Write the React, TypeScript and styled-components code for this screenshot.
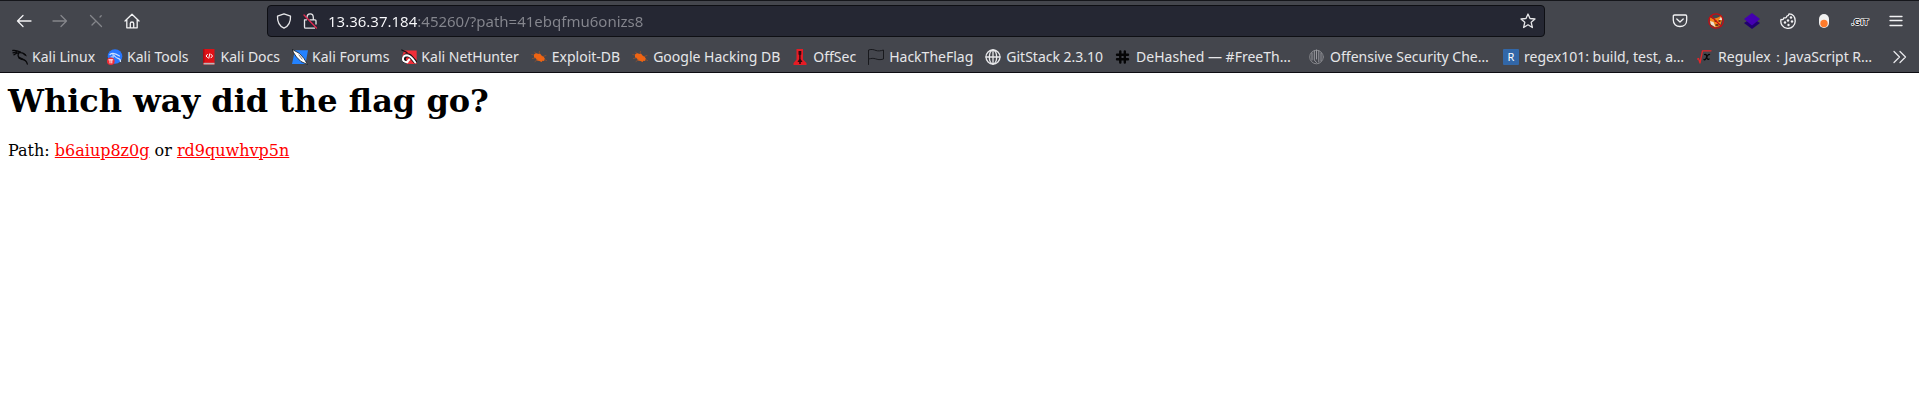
import React from "react";
import styled, { createGlobalStyle } from "styled-components";

const GlobalStyle = createGlobalStyle`
  * { box-sizing: border-box; }
  body {
    margin: 0;
    background: #fff;
    color: #000;
    font-family: "DejaVu Serif", serif;
    font-size: 16px;
  }
`;

const Chrome = styled.header`
  background: #44464d;
  border-top: 1px solid #15161b;
  border-bottom: 1px solid #0c0c12;
  color: #e6e6e9;
  font-family: "Noto Sans", sans-serif;
  font-size: 14px;
`;

const NavBar = styled.div`
  display: flex;
  align-items: center;
  height: 40px;
  padding: 0 5px 0 6px;
`;

const ToolGroup = styled.nav`
  display: flex;
`;

const ToolButton = styled.button`
  display: flex;
  align-items: center;
  justify-content: center;
  width: 36px;
  height: 32px;
  padding: 0;
  border: 0;
  background: none;
  color: #f2f2f4;

  &:disabled { color: #85868b; }
`;

const AddressBar = styled.form`
  display: flex;
  flex: 1;
  align-items: center;
  gap: 10px;
  height: 32px;
  margin: 0 117px;
  padding: 0 8px;
  border: 1px solid #0e0f14;
  border-radius: 4px;
  background: #252733;
`;

const BarButton = styled.button`
  display: flex;
  padding: 0;
  border: 0;
  background: none;
  color: #e6e6e9;
`;

const AddressInput = styled.input`
  flex: 1;
  min-width: 0;
  height: 24px;
  padding: 0;
  border: 0;
  outline: 0;
  color: #fbfbfe;
  font-family: inherit;
  font-size: 15px;
  background: linear-gradient(to right, #fbfbfe 89px, #85868e 89px);
  -webkit-background-clip: text;
  background-clip: text;
  -webkit-text-fill-color: transparent;
`;

const BookmarkBar = styled.nav`
  display: flex;
  align-items: center;
  justify-content: space-between;
  height: 31px;
  padding: 1px 11px 0 12px;
`;

const BookmarkList = styled.ul`
  display: flex;
  gap: 12px;
  margin: 0;
  padding: 0;
  list-style: none;
`;

const Bookmark = styled.a<{ $compact?: boolean; $wide?: boolean }>`
  display: flex;
  align-items: center;
  gap: ${(p) => (p.$compact ? "4px" : "5px")};
  width: ${(p) => (p.$wide ? "182px" : "auto")};
  color: inherit;
  line-height: 20px;
  text-decoration: none;
  white-space: nowrap;
`;

const Page = styled.main`
  padding: 8px;
`;

const Title = styled.h1`
  margin: 0 0 20px;
  font-size: 32px;
  line-height: 40px;
`;

const Paths = styled.p`
  margin: 0;
  line-height: 20px;
`;

const PathLink = styled.a`
  color: #ff0000;
`;

const Icon = styled.svg.attrs({ viewBox: "0 0 16 16", width: 16, height: 16, "aria-hidden": true })`
  flex: none;
  fill: none;
  stroke: currentColor;
  stroke-width: 1.3;
  stroke-linecap: round;
  stroke-linejoin: round;
`;

const KaliLinux = () => (
  <Icon>
    <path d="M.8 1.500C3.500 1 6.500 2.200 8.500 3.200M1 3.800 4.500 2.800M2 5.800C4 4 6 3.500 8.500 3.600 10.500 3.600 12 4 13.300 6M7 3.800C5 6.500 6.500 9 9.500 9.800 13 10.500 14.800 12 15.300 15" stroke="#08080a" strokeWidth="1.300" />
    <path d="M10 3.500 13.500 5 15 7.500 12 6ZM6 6.500 6.500 9.500 9.500 11 13 11.500 10 9 7.500 8Z" fill="#08080a" stroke="none" />
  </Icon>
);

const KaliTools = () => (
  <Icon>
    <circle cx="8" cy="7.500" r="7.300" fill="#2777ff" stroke="none" />
    <path d="M3 5.500C5.500 3 8.500 4.200 12.500 7M5.500 6C8 5.500 7.500 9 11 9.300 13 9.600 13.500 11 13.500 12.500M4 8 6.500 7.800" stroke="#cde1ff" strokeWidth="1.200" />
    <circle cx="3.800" cy="12.200" r="3.800" fill="#ef2b35" stroke="none" />
    <path d="M1.800 10.800H5.800M3 10.800V14M4.800 10.800V14" stroke="#fff" strokeWidth="0.9" />
  </Icon>
);

const KaliDocs = () => (
  <Icon>
    <path d="M2 0H13.500V15.500H2Z" fill="#de1117" stroke="none" />
    <path d="M2 0H3.500V15.500H2Z" fill="#a90c12" stroke="none" />
    <path d="M2.500 13.800H13.500V15.500H2.500Z" fill="#bcb5b7" stroke="none" />
    <path d="M6.500 5.300 5 7 6.500 8.500M10 5.300 11.500 7 10 8.800M8.800 4.800 7.800 9.200" stroke="#fff" strokeWidth="1" />
  </Icon>
);

const KaliForums = () => (
  <Icon>
    <path d="M3 1.300H16L13.500 15H0Z" fill="#2382ff" stroke="none" />
    <path d="M.3 .5 4 2.500 7.500 4.500 12 9.500 15.500 15.500 9 12.500 4.500 8 1.800 4Z" fill="#fff" stroke="#17191d" strokeWidth="0.8" />
    <path d="M7 6 10 10" stroke="#555a63" strokeWidth="0.8" />
  </Icon>
);

const KaliNetHunter = () => (
  <Icon>
    <path d="M3 1.500H15.700V15H6L1 8Z" fill="#f12e38" stroke="none" />
    <path d="M3.500 12C1.500 8 5 5 9 7L14 12.500" stroke="#121317" strokeWidth="4" />
    <path d="M6.500 13.200C0 13.500 1 6.500 6 6.300 9.500 6.300 11.500 9.500 14.300 13.500M6.500 12.500 8.300 10.500" stroke="#fff" strokeWidth="2" />
    <path d="M.8 1 6 3.500" stroke="#121317" />
  </Icon>
);

const Bug = () => (
  <Icon>
    <path d="M3 5.500 5 4 7.500 5 9 4.500 10.500 6.500 12.500 7.500 14 10 13 12 11.500 11.800 10.500 13 8.500 12 6 11.500 5 9.500 3 8.500Z" fill="#ef6413" stroke="none" />
    <path d="M5 4.500 3.500 3M8 4.500 8.500 2.500M12 7.500 15 6.500M4 9 1.500 9.500M6 11 4 12.500M13.500 10.500 15.500 11.500M2.500 6 .8 5.500" stroke="#96522f" strokeWidth="0.8" />
  </Icon>
);

const OffSec = () => (
  <Icon>
    <path d="M4.500 0H11V10.500L14.500 14V16H1.500V14L4.500 10.500Z" fill="#e51c25" stroke="none" />
    <path d="M6.500 2H9.300V5.500L8.600 6V10L10.500 13H8.800V15H7.200V13H5.500L7.200 10V6L6.500 5.500Z" fill="#2d0b10" stroke="none" />
  </Icon>
);

const Flag = () => (
  <Icon><path d="M.5 15.500V1C4 -.2 6 .8 8 1.500S12.500 2 15.500 1V10C12 11.200 9.500 10.500 7.500 9.800S3 9.300 .8 10" stroke="#18191d" strokeWidth="1" /></Icon>
);

const Globe = () => (
  <Icon><circle cx="8" cy="8" r="7" /><ellipse cx="8" cy="8" rx="3.700" ry="7" /><path d="M1 8H15M8 1V15" /></Icon>
);

const Hash = () => (
  <Icon><path d="M5.300 2.500V13.500M9.800 2.500V13.500M2 5.800H13M2 10.300H13" stroke="#050506" strokeWidth="2.400" /></Icon>
);

const Striped = () => (
  <Icon>
    <circle cx="7.500" cy="8" r="6.800" stroke="#85868b" strokeWidth="1" />
    <path d="M3 4V11M5.300 2V11L7.500 13.500M7.500 1V10M9.800 2V13M12 4V12" stroke="#a1a2a7" strokeWidth="0.9" />
  </Icon>
);

const Regex = () => (
  <Icon>
    <rect width="16" height="16" rx="1" fill="#3267a8" stroke="none" />
    <text x="8" y="12" fill="#fff" stroke="none" fontSize="11" textAnchor="middle">R</text>
  </Icon>
);

const Regulex = () => (
  <Icon>
    <path d="M.5 10 1.500 9.500 3 14 5.500 1.800H14" stroke="#e3262a" strokeWidth="1.300" />
    <path d="M7.500 5.500C9 4.800 9.500 6 9.800 8S10.800 11 12 10M12.500 5.500C10.800 5 9.500 8.500 8.800 9.800S7.200 11 7 10.300" stroke="#060607" strokeWidth="1.300" />
  </Icon>
);

const bookmarks: { label: string; icon: React.FC; compact?: boolean; wide?: boolean }[] = [
  { label: "Kali Linux", icon: KaliLinux, compact: true },
  { label: "Kali Tools", icon: KaliTools, compact: true },
  { label: "Kali Docs", icon: KaliDocs, compact: true },
  { label: "Kali Forums", icon: KaliForums, compact: true },
  { label: "Kali NetHunter", icon: KaliNetHunter, compact: true },
  { label: "Exploit-DB", icon: Bug },
  { label: "Google Hacking DB", icon: Bug },
  { label: "OffSec", icon: OffSec },
  { label: "HackTheFlag", icon: Flag },
  { label: "GitStack 2.3.10", icon: Globe },
  { label: "DeHashed — #FreeTh…", icon: Hash, wide: true },
  { label: "Offensive Security Che…", icon: Striped, wide: true },
  { label: "regex101: build, test, a…", icon: Regex, wide: true },
  { label: "Regulex：JavaScript R…", icon: Regulex, wide: true },
];

export default function App() {
  return (
    <>
      <GlobalStyle />
      <Chrome>
        <NavBar>
          <ToolGroup aria-label="Navigation">
            <ToolButton aria-label="Back"><Icon><path d="M15 8H1.500M7 2.500 1.500 8 7 13.500" /></Icon></ToolButton>
            <ToolButton aria-label="Forward" disabled><Icon><path d="M1 8H14.500M9 2.500 14.500 8 9 13.500" /></Icon></ToolButton>
            <ToolButton aria-label="Stop" disabled>
              <Icon><path d="M2.500 2.500 13.500 13.500M8 8 4 12M12 4 13.200 2.800" /></Icon>
            </ToolButton>
            <ToolButton aria-label="Home">
              <Icon><path d="M1 8 8 1.200 15 8M2.800 6.500V14.800H13.200V6.500M6.300 14.500V10.500Q6.300 9 8 9T9.700 10.500V14.500" /></Icon>
            </ToolButton>
          </ToolGroup>

          <AddressBar>
            <BarButton type="button" aria-label="Tracking protection">
              <Icon><path d="M8 .8 14.500 3.200C14.800 9 12.500 13 8 15.200 3.500 13 1.200 9 1.500 3.200Z" /></Icon>
            </BarButton>
            <BarButton type="button" aria-label="Connection not secure">
              <Icon>
                <path d="M5 4.500C5 2 6.200 .8 8.200 .8S11.300 2 11.300 4.500V6.800M8 6.800H13Q14 6.800 14 7.800V11M2.500 6.800V14Q2.500 15.200 3.500 15.200H12.500M2.500 6.800H4.500" />
                <path d="M2 2 14.500 15" stroke="#e22850" />
              </Icon>
            </BarButton>
            <AddressInput aria-label="Address" defaultValue="13.36.37.184:45260/?path=41ebqfmu6onizs8" />
            <BarButton type="button" aria-label="Bookmark this page">
              <Icon><path d="M8 1 10 5.500 15 6 11.200 9.300 12.400 14.500 8 11.800 3.600 14.500 4.800 9.300 1 6 6 5.500Z" /></Icon>
            </BarButton>
          </AddressBar>

          <ToolGroup aria-label="Extensions">
            <ToolButton aria-label="Pocket">
              <Icon><path d="M2.500 2H13.500Q14.700 2 14.700 3.200V7C14.700 11 12 13.500 8 13.500S1.300 11 1.300 7V3.200Q1.300 2 2.500 2ZM4.800 6 8 9 11.200 6" /></Icon>
            </ToolButton>
            <ToolButton aria-label="Proxy">
              <Icon>
                <path d="M1.500 4 5 6 10 4.500 13.500 2.500 14 7 12 13 7 14.500 2.500 11Z" fill="#f48218" stroke="none" />
                <path d="M2 8 5.500 9 7.500 14 3 11.500ZM13.500 3 14 7 11 7Z" fill="#eee0cf" stroke="none" />
                <path d="M7 8H8M11 8H12M8 12H10" stroke="#432316" />
                <circle cx="8" cy="8" r="7.200" stroke="#c70c12" />
                <path d="M3 3 13 13" stroke="#c70c12" />
              </Icon>
            </ToolButton>
            <ToolButton aria-label="Layers">
              <Icon>
                <path d="M0 10 8 5 16 10 8 16Z" fill="#21006f" stroke="none" />
                <path d="M0 6 8 0 16 6 8 12.500Z" fill="#4400b0" stroke="none" />
              </Icon>
            </ToolButton>
            <ToolButton aria-label="Cookies">
              <Icon>
                <path d="M9 .8C13 1 15.200 4 15.200 8A7.200 7.200 0 1 1 1 6.500Q3.500 7 3.800 4.800 6.500 5.500 6.800 3.200 8.800 3 9 .8Z" />
                <g fill="currentColor" stroke="none"><circle cx="11" cy="4.500" r="1.200" /><circle cx="8" cy="7.500" r="1.200" /><circle cx="12" cy="8.500" r="1.200" /><circle cx="5" cy="9.500" r="1.200" /><circle cx="8.500" cy="12" r="1.200" /></g>
              </Icon>
            </ToolButton>
            <ToolButton aria-label="Toggle">
              <Icon><rect x="3" y="1" width="10" height="14" rx="5" fill="#f1f1f1" stroke="none" /><circle cx="8" cy="10.500" r="3.700" fill="#ff7b2b" stroke="none" /></Icon>
            </ToolButton>
            <ToolButton aria-label="DotGit">
              <Icon overflow="visible"><text x="8" y="12" fontFamily="Liberation Sans" fontSize="9" fontWeight="700" textAnchor="middle" fill="#101114" stroke="#fff" strokeWidth="1.300" paintOrder="stroke" textRendering="geometricPrecision">.GIT</text></Icon>
            </ToolButton>
            <ToolButton aria-label="Menu"><Icon><path d="M2 3.500H14M2 7.500H14M2 12.500H14" /></Icon></ToolButton>
          </ToolGroup>
        </NavBar>

        <BookmarkBar aria-label="Bookmarks">
          <BookmarkList>
            {bookmarks.map(({ label, icon: BookmarkIcon, compact, wide }) => (
              <li key={label}>
                <Bookmark href="#" $compact={compact} $wide={wide}><BookmarkIcon />{label}</Bookmark>
              </li>
            ))}
          </BookmarkList>
          <BarButton aria-label="More bookmarks"><Icon><path d="M2 2.500 7.500 8 2 13.500M8 2.500 13.500 8 8 13.500" /></Icon></BarButton>
        </BookmarkBar>
      </Chrome>
      <Page>
        <Title>Which way did the flag go?</Title>
        <Paths>
          Path: <PathLink href="#">b6aiup8z0g</PathLink> or <PathLink href="#">rd9quwhvp5n</PathLink>
        </Paths>
      </Page>
    </>
  );
}
